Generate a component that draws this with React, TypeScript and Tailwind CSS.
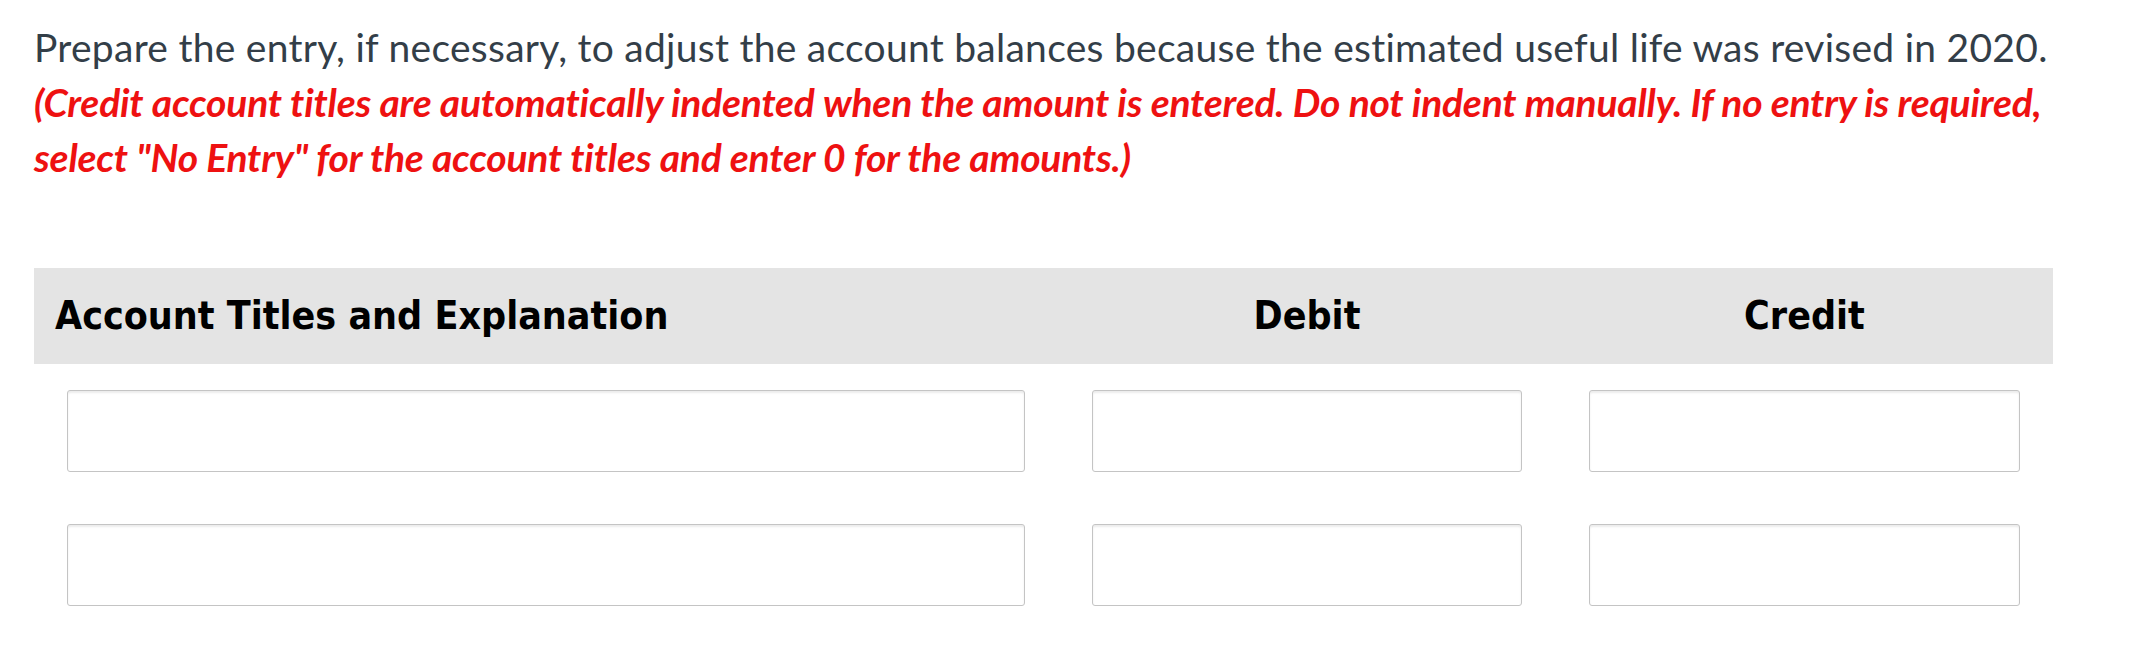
import React from "react";

const rows = [0, 1];

const Field = () => (
    <div className="h-[82px] w-full rounded-[3px] border border-[#c4c4c4] bg-white shadow-[inset_0_2px_2px_rgba(0,0,0,0.08)]" />
);

const App = () => {
    return (
        <div className="min-h-[662px] w-full bg-white pl-[34px] pt-[20px]" style={{ fontFamily: "Lato, 'Open Sans', sans-serif" }}>
            <p className="w-[2060px] text-[39px] leading-[55px] tracking-[0.27px] text-[#333e48]">
                Prepare the entry, if necessary, to adjust the account balances because the estimated useful life was revised in 2020.
            </p>
            <p className="w-[2060px] text-[39px] font-bold italic leading-[55px] tracking-[-0.2px] text-[#ee1111]">
                (Credit account titles are automatically indented when the amount is entered. Do not indent manually. If no entry is required, select "No Entry" for the account titles and enter 0 for the amounts.)
            </p>

            <div className="mt-[83px] w-[2019px]">
                <div
                    className="grid h-[96px] grid-cols-[1024px_498px_497px] items-center bg-[#e4e4e4] text-[39px] font-bold text-black"
                    style={{ fontFamily: "'DejaVu Sans Condensed', 'DejaVu Sans', sans-serif", fontStretch: "condensed" }}
                >
                    <div className="pl-[21px]">Account Titles and Explanation</div>
                    <div className="text-center">Debit</div>
                    <div className="text-center">Credit</div>
                </div>

                <div className="flex flex-col gap-[52px] pt-[26px]">
                    {rows.map((r) => (
                        <div key={r} className="grid grid-cols-[1024px_498px_497px]">
                            <div className="px-[33px]"><Field /></div>
                            <div className="px-[34px]"><Field /></div>
                            <div className="px-[33px]"><Field /></div>
                        </div>
                    ))}
                </div>
            </div>
        </div>
    );
};

export default App;
